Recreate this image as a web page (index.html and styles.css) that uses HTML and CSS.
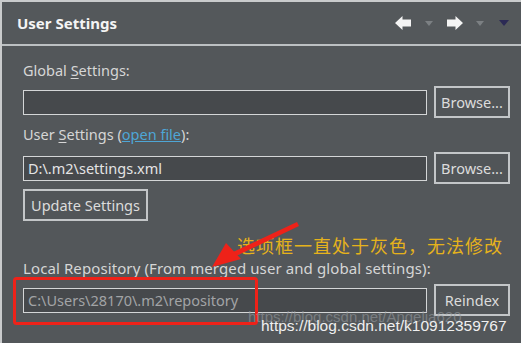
FILE: index.html
```html
<!DOCTYPE html>
<html>
<head>
<meta charset="utf-8">
<link rel="stylesheet" href="styles.css">
</head>
<body>
<div class="frame">
  <div class="header">
    <span class="title">User Settings</span>
    <div class="tools">
      <svg class="ico" width="17" height="14" viewBox="0 0 17 14"><path d="M0 7 L7.5 0 L7.5 3.5 L16 3.5 L16 10.5 L7.5 10.5 L7.5 14 Z" fill="#f4f4f4"/></svg>
      <svg class="tri" width="8" height="5" viewBox="0 0 8 5"><path d="M0 0 L8 0 L4 5 Z" fill="#7c8083"/></svg>
      <svg class="ico" width="17" height="14" viewBox="0 0 17 14"><path d="M17 7 L9.5 0 L9.5 3.5 L1 3.5 L1 10.5 L9.5 10.5 L9.5 14 Z" fill="#f4f4f4"/></svg>
      <svg class="tri" width="8" height="5" viewBox="0 0 8 5"><path d="M0 0 L8 0 L4 5 Z" fill="#7c8083"/></svg>
      <svg class="tri nav" width="10" height="6" viewBox="0 0 10 6"><path d="M0 0 L10 0 L5 6 Z" fill="#2c2a55"/></svg>
    </div>
  </div>
  <div class="content">
    <div class="label l1">Global <u>S</u>ettings:</div>
    <div class="row r1">
      <div class="field"></div>
      <div class="btn">Browse...</div>
    </div>
    <div class="label l2">User <u>S</u>ettings (<a class="link">open file</a>):</div>
    <div class="row r2">
      <div class="field">D:\.m2\settings.xml</div>
      <div class="btn">Browse...</div>
    </div>
    <div class="btn update">Update Settings</div>
    <div class="label l3">Local Repository (From merged user and global settings):</div>
    <div class="row r3">
      <div class="field disabled">C:\Users\28170\.m2\repository</div>
      <div class="btn">Reindex</div>
    </div>
  </div>
  <div class="note">选项框一直处于灰色，无法修改</div>
  <svg class="marks" width="521" height="343" viewBox="0 0 521 343">
    <rect x="14.5" y="278.5" width="242" height="45" rx="2" fill="none" stroke="#ee2219" stroke-width="3"/>
    <path d="M297 222 L299 226 L236 256 L233 252 Z" fill="#ee2219"/>
    <path d="M212 267 L226 243 L241 259 Z" fill="#ee2219"/>
  </svg>
  <div class="wm wm1">https://blog.csdn.net/Angelia620</div>
  <div class="wm wm2">https://blog.csdn.net/k10912359767</div>
</div>
</body>
</html>
```
FILE: styles.css
```css
html, body {
  margin: 0;
  padding: 0;
  background: #c9cbcc;
}
.frame {
  position: relative;
  width: 519px;
  height: 341px;
  margin: 2px 0 0 2px;
  background: #53575a;
  overflow: hidden;
  font-family: "Noto Sans", "Open Sans", sans-serif;
  color: #dadada;
}
.header {
  height: 42px;
  border-bottom: 2px solid #bcc0c2;
  display: flex;
  align-items: center;
  padding: 0 12px 0 15px;
  background: #54585b;
}
.title {
  font-weight: bold;
  font-size: 15px;
  color: #f4f4f4;
  flex: 1;
}
.tools {
  display: flex;
  align-items: center;
}
.tools .ico { margin-right: 13px; }
.tools .tri { margin-right: 13px; }
.tools .nav { margin-right: 0; margin-left: 2px; }
.content {
  padding: 15px 9px 0 21px;
  display: flex;
  flex-direction: column;
}
.label {
  height: 18px;
  line-height: 18px;
  font-size: 14.5px;
  color: #d6d6d6;
  white-space: nowrap;
}
.l3 { font-size: 15px; letter-spacing: 0.1px; }
.label u { text-decoration-thickness: 1px; text-underline-offset: 2px; }
.link {
  color: #4ea6d6;
  text-decoration: underline;
}
.row {
  display: flex;
  align-items: center;
  gap: 7px;
  height: 32px;
}
.r1 { margin-top: 7px; }
.l2 { margin-top: 7px; }
.r2 { margin-top: 9px; }
.field {
  height: 23px;
  border: 1px solid #d4d6d7;
  background: #46494c;
  font-size: 14.5px;
  line-height: 23px;
  padding-left: 4px;
  box-sizing: content-box;
  width: 398px;
  color: #e4e4e4;
  white-space: nowrap;
}
.field.disabled { color: #a2a4a6; }
.btn {
  box-sizing: border-box;
  width: 76px;
  height: 32px;
  border: 2px solid #c3c6c8;
  font-size: 14.5px;
  line-height: 28px;
  text-align: center;
  color: #dcdcdc;
  background: #515558;
}
.update {
  margin-top: 5px;
  width: 125px;
  align-self: flex-start;
}
.l3 { margin-top: 38px; }
.r3 { margin-top: 7px; }
.note {
  position: absolute;
  left: 235px;
  top: 230px;
  font-family: "Noto Sans CJK SC", sans-serif;
  font-size: 18px;
  color: #e5b21c;
  letter-spacing: 1px;
  white-space: nowrap;
}
.marks {
  position: absolute;
  left: -2px;
  top: -2px;
}
.wm {
  position: absolute;
  font-family: "Liberation Sans", sans-serif;
  white-space: nowrap;
}
.wm1 {
  left: 246px;
  top: 307px;
  font-size: 15px;
  line-height: 15px;
  color: rgba(150, 154, 158, 0.6);
}
.wm2 {
  left: 259px;
  top: 315px;
  color: #f0f0f0;
  font-size: 15.5px;
}
```
